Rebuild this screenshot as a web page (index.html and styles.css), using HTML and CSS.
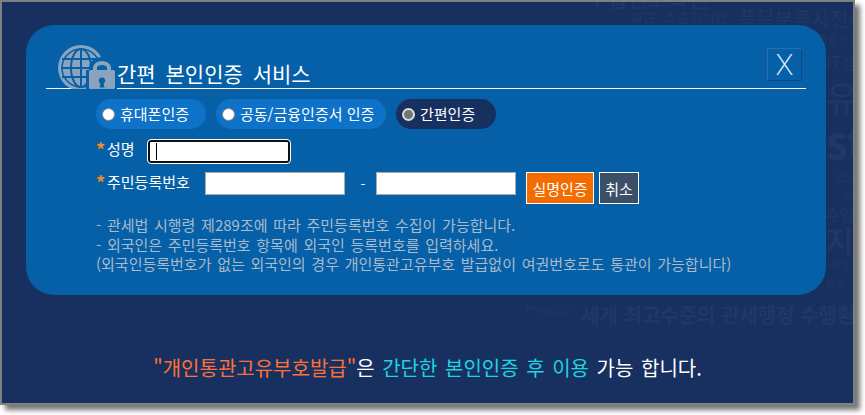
FILE: index.html
```html
<!DOCTYPE html>
<html lang="ko">
<head>
<meta charset="utf-8">
<title>간편 본인인증 서비스</title>
<link rel="stylesheet" href="styles.css">
</head>
<body>
<div class="window">
  <div class="watermark" aria-hidden="true">
    <span class="wm wm1">수입신고확인</span>
    <span class="wm wm2">환급 &nbsp;수출입기업</span>
    <span class="wm wm3">품목분류사전심사</span>
    <span class="wm wm4">협정 신고</span>
    <span class="wm wm5">IT생산</span>
    <span class="wm wm6">유바</span>
    <span class="wm wm7">st</span>
    <span class="wm wm8">GST</span>
    <span class="wm wm9">수출</span>
    <span class="wm wm10">수입</span>
    <span class="wm wm11">지원</span>
    <span class="wm wm12">세 장치</span>
    <span class="wm wm13">창구</span>
    <span class="wm wm14">FTA해외직구</span>
    <span class="wm wm15">세계 최고수준의 관세행정 수행환경</span>
  </div>
  <section class="panel">
    <header class="head">
      <svg class="logo" viewBox="0 0 60 45" width="60" height="45" aria-hidden="true">
        <circle cx="24" cy="24" r="23" fill="#8ba4bd"/>
        <g fill="none" stroke="#0560a8">
          <circle cx="24" cy="24" r="19" stroke-width="1.500"/>
          <ellipse cx="24" cy="24" rx="10" ry="19" stroke-width="2"/>
          <path d="M24 5v38M5 15h38M4 24h40M5 33h38" stroke-width="2"/>
        </g>
        <path d="M29 45v-19h3v-2a13 11 0 0 1 26 0v2h3v19z" fill="#0560a8"/>
        <path d="M38 27v-3.500a7 4.500 0 0 1 14 0v3.500" fill="none" stroke="#8ba4bd" stroke-width="4"/>
        <rect x="32" y="26" width="26" height="19" rx="1.500" fill="#8ba4bd"/>
        <path d="M45 33.500a3.200 3.200 0 0 1 1.600 6l.9 4h-5l.9-4a3.200 3.200 0 0 1 1.600-6z" fill="#0560a8"/>
      </svg>
      <h1 class="title">간편 본인인증 서비스</h1>
      <button class="close" type="button">X</button>
    </header>
    <div class="content">
      <div class="tabs">
        <span class="tab tab-phone"><i class="radio"></i>휴대폰인증</span>
        <span class="tab tab-cert"><i class="radio"></i>공동/금융인증서 인증</span>
        <span class="tab tab-easy active"><i class="radio on"></i>간편인증</span>
      </div>
      <div class="row name-row">
        <label class="label"><b>*</b>성명</label>
        <span class="input focused"><i class="caret"></i></span>
      </div>
      <div class="row id-row">
        <label class="label"><b>*</b>주민등록번호</label>
        <span class="input id"></span>
        <span class="dash">-</span>
        <span class="input id"></span>
        <button class="btn verify" type="button">실명인증</button>
        <button class="btn cancel" type="button">취소</button>
      </div>
      <ul class="notes">
        <li>- 관세법 시행령 제289조에 따라 주민등록번호 수집이 가능합니다.</li>
        <li>- 외국인은 주민등록번호 항목에 외국인 등록번호를 입력하세요.</li>
        <li>(외국인등록번호가 없는 외국인의 경우 개인통관고유부호 발급없이 여권번호로도 통관이 가능합니다)</li>
      </ul>
    </div>
  </section>
  <p class="footer"><span class="orange">"개인통관고유부호발급"</span>은 <span class="cyan">간단한 본인인증 후 이용</span> 가능 합니다.</p>
</div>
</body>
</html>
```

FILE: styles.css
```css
* { box-sizing: border-box; }
html, body { margin: 0; padding: 0; background: #fff; }
body {
  width: 865px;
  height: 415px;
  overflow: hidden;
  font-family: "Noto Sans CJK KR", "Liberation Sans", sans-serif;
}
.window {
  position: relative;
  width: 855px;
  height: 405px;
  background: #17305f;
  border: 2px solid #808080;
  box-shadow: 5px 5px 5px rgba(0, 0, 0, .55);
  padding: 23px 0 0 24px;
}
.watermark {
  position: absolute;
  inset: 0;
  overflow: hidden;
  color: #1f3868;
}
.wm { position: absolute; white-space: nowrap; line-height: 1; }
.wm1 { left: 585px; top: -16px; font-size: 22px; }
.wm2 { left: 628px; top: 9px; font-size: 14px; }
.wm3 { left: 736px; top: 7px; font-size: 20px; }
.wm4 { left: 816px; top: 32px; font-size: 10px; }
.wm5 { left: 824px; top: 51px; font-size: 17px; }
.wm6 { left: 824px; top: 78px; font-size: 34px; }
.wm7 { left: 824px; top: 116px; font-size: 44px; font-weight: 700; }
.wm8 { left: 834px; top: 169px; font-size: 12px; }
.wm9 { left: 840px; top: 187px; font-size: 12px; }
.wm10 { left: 824px; top: 204px; font-size: 15px; }
.wm11 { left: 824px; top: 222px; font-size: 30px; font-weight: 700; }
.wm12 { left: 828px; top: 258px; font-size: 10px; }
.wm13 { left: 824px; top: 277px; font-size: 10px; }
.wm14 { left: 524px; top: 304px; font-size: 9px; }
.wm15 { left: 579px; top: 303px; font-size: 20px; font-weight: 700; }

.panel {
  position: relative;
  width: 800px;
  height: 270px;
  background: #0560a8;
  border-radius: 28px;
  padding-top: 10px;
}
.head {
  position: relative;
  margin: 0 20px;
  height: 54px;
  border-bottom: 1px solid #fff;
  padding-left: 71px;
  display: flex;
  align-items: flex-end;
}
.logo { position: absolute; left: 11px; top: 9px; }
.title {
  position: relative;
  margin: 0;
  font-size: 21px;
  font-weight: 400;
  line-height: 30px;
  color: #fff;
  word-spacing: 4px;
}
.close {
  position: absolute;
  left: 721px;
  top: 13px;
  width: 35px;
  height: 33px;
  padding: 0;
  background: #0560a8;
  border: 1px solid #2c6ea6;
  border-right-color: #0a4a85;
  border-bottom-color: #0a4a85;
  color: #e8f0f8;
  font: 200 28px/1 "Inter", "Liberation Sans", sans-serif;
}
.content { padding: 10px 0 0 70px; }
.tabs { display: flex; gap: 10px; }
.tab {
  display: flex;
  align-items: center;
  height: 30px;
  padding-left: 6px;
  gap: 5px;
  border-radius: 15px;
  background: #0e72c8;
  color: #fff;
  font-size: 15px;
  line-height: 28px;
  white-space: nowrap;
}
.tab-phone { width: 110px; }
.tab-cert { width: 170px; }
.tab-easy { width: 100px; }
.tab.active { background: #17305f; }
.radio {
  flex: none;
  width: 13px;
  height: 13px;
  border-radius: 50%;
  background: #fff;
  border: 1px solid #8a8a8a;
}
.radio.on { background: #757575; border: 2px solid #ddd; }
.row { display: flex; align-items: center; }
.label { color: #fff; font-size: 15px; line-height: 20px; display: flex; white-space: nowrap; }
.label b { color: #f58a1f; font-size: 18px; font-weight: 700; width: 11px; }
.name-row { margin-top: 10px; height: 24px; }
.name-row .label { width: 52px; margin-top: -4px; }
.id-row { margin-top: 9px; height: 32px; }
.id-row .label { width: 109px; margin-top: -12px; }
.input { display: block; height: 23px; background: #fff; border: 1px solid #aaa; }
.input.focused {
  position: relative;
  width: 142px;
  border: 2px solid #101010;
  outline: 1px solid #fff;
  border-radius: 3px;
}
.caret { position: absolute; left: 6px; top: 1px; width: 1px; height: 17px; background: #000; }
.input.id { width: 140px; margin-top: -9px; }
.dash { width: 31px; padding-left: 5px; text-align: center; color: #fff; font-size: 14px; margin-top: -9px; }
.btn {
  height: 32px;
  padding: 0;
  border: 1px solid #fff;
  color: #fff;
  font-family: inherit;
  font-size: 15px;
}
.verify { width: 68px; margin-left: 10px; background: #f26c00; }
.cancel { width: 40px; margin-left: 5px; background: #3c4f68; }
.notes {
  list-style: none;
  margin: 11px 0 0;
  padding: 0;
  color: #a9bacb;
  font-size: 15px;
  line-height: 19.500px;
  word-spacing: 1.500px;
}
.footer {
  position: relative;
  margin: 59px 0 0;
  text-align: center;
  width: 803px;
  color: #fff;
  font-size: 20px;
  line-height: 28px;
  word-spacing: 2px;
}
.orange { color: #ff7038; }
.cyan { color: #1fd3e0; }
```
